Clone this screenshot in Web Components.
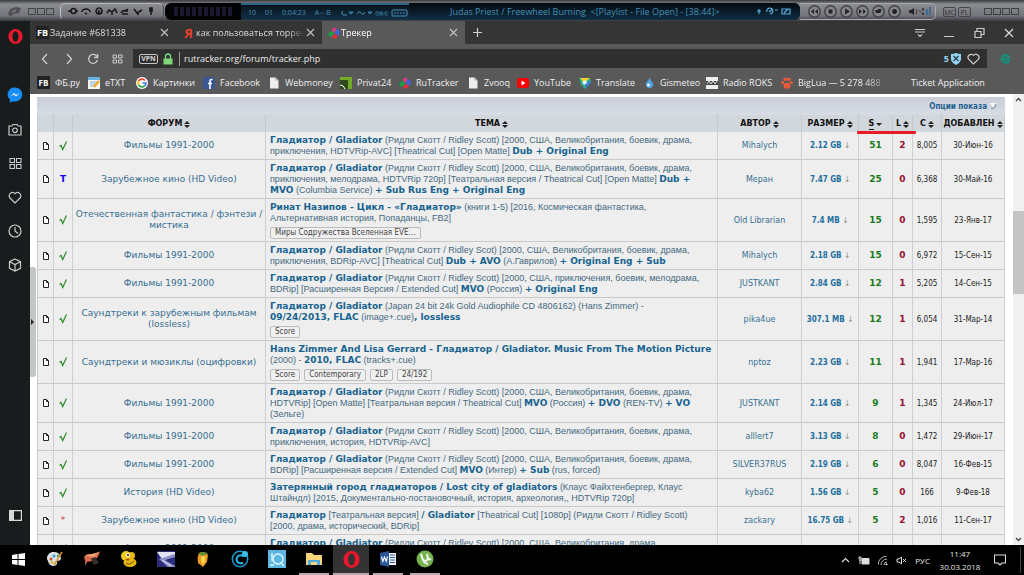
<!DOCTYPE html>
<html lang="ru">
<head>
<meta charset="utf-8">
<title>Трекер</title>
<style>
html, body { margin: 0; height: 100%; }
body { display: flex; overflow: hidden; background: #000; }
</style>
</head>
<body>
<desktop-screen></desktop-screen>
<script>
const define = (name, css, html) => {
  customElements.define(name, class extends HTMLElement {
    constructor() {
      super();
      const root = this.attachShadow({ mode: 'open' });
      root.innerHTML = `<style>*{box-sizing:border-box}svg{display:block;flex:none}button{all:unset;box-sizing:border-box;display:flex;align-items:center;justify-content:center;flex:none}a{color:inherit;text-decoration:none}${css}</style>${html}`;
    }
  });
};
const svg = (w, h, body, vb) => `<svg width="${w}" height="${h}" viewBox="${vb || `0 0 ${w} ${h}`}" fill="none" aria-hidden="true">${body}</svg>`;

const I = {
  opera: s => svg(s, s, '<ellipse cx="8" cy="8" rx="7.6" ry="8" fill="#e8192c"/><ellipse cx="8" cy="8" rx="3.2" ry="5.7" fill="var(--hole,#181c1c)"/>', '0 0 16 16'),
  close: svg(9, 9, '<path d="M1 1l7 7M8 1l-7 7" stroke="#c4c4c4" stroke-width="1.1"/>'),
  file: svg(12, 12, '<path d="M2 .5h5.5L10.500 3.500V11.500H2z" fill="#eee"/><path d="M7.500.5v3h3" fill="#aaa"/>'),
  pinwheel: svg(12, 12, '<path d="M0 7q2-3 5-3l1 3-3 3q-2 0-3-3z" fill="#15a04a"/><path d="M4 3q1-3 4-2l1 3-3 2z" fill="#e23a7e"/><path d="M8 2q4 1 4 5l-3 2-2-3z" fill="#3c63d8"/><path d="M4 9l3-2 3 2q-2 3-5 2.500z" fill="#e2303c"/>'),
};

/* ---------- media player strip ---------- */
const glyphs = ['M1 4h3M9 4h2M4 4a2.500 2.500 0 1 0 5 0a2.500 2.500 0 1 0-5 0', 'M2 5a4 3 0 0 1 8 0M5 6l2 1', 'M6 1a3 3 0 1 0 .1 0M6 3v3', 'M1 6l2-3 3 2 3-3 2 4M5 7h2', 'M2 6c2-4 4-1 7-4M3 7h6M4 4h5', 'M2 2l3 4 5-3M6 6v2', 'M6 1v3M5 1h2v3h-2zM6 4v4'];
const mediaPaths = ['M6 4l-3 2.500 3 2.500zM10 4l-3 2.500 3 2.500z', 'M4.500 4.500h4v4h-4z', 'M5 3.500l5 3-5 3z', 'M3 4l3 2.500-3 2.500zM7 4l3 2.500-3 2.500z', 'M3.500 5h2l1-1h3l-1 4h-5z', 'M6.500 4a2.500 2.500 0 1 0 .1 0'];
define('player-strip', `
:host{display:flex;height:21px;flex:none;padding:3px 5px 1px 0;background:linear-gradient(#3a3b3e,#8b8c92 20%,#74757b 75%,#3b3c3e);font:9px "Open Sans",sans-serif;color:#4590b8;align-items:stretch;overflow:hidden}
.logo{width:60px;display:flex;align-items:center;gap:6px;padding-left:7px}
.mini{display:flex;gap:1px}.mini i{width:8px;height:7px;border:1px solid #45464a}
.tools{width:104px;display:flex;align-items:center;justify-content:space-around;padding:0 5px;border:1px solid #c0c1c6;border-color:#b4b5ba #4b4c50 #4b4c50 #c0c1c6;border-radius:5px}
.lcd{flex:1;display:flex;background:#020305;border-radius:6px;margin-left:1px;overflow:hidden;min-width:0}
.eq{width:60px;margin:4px 7px 4px 9px;background:repeating-linear-gradient(90deg,#1d1730 0 4px,#020305 4px 6px)}
.time{display:flex;align-items:center;gap:9px;width:168px;padding-left:7px;font-size:7px;border-top:2px solid #2d6385;background:linear-gradient(#08131c,#123248);white-space:pre}
.song{flex:1;padding-left:41px;display:flex;align-items:center;white-space:pre;background:linear-gradient(#05090e,#0e2f44)}
.st{display:flex;align-items:center;padding-right:8px;background:linear-gradient(#05090e,#0e2f44)}
.media{display:flex;align-items:center;gap:3px;padding:0 0 0 8px;border:1px solid #a8a9ae;border-left:0;border-radius:0 5px 5px 0;width:136px;margin-right:6px}
.media > svg{margin-left:4px}
.tag{height:10px;width:13px;border:1px solid #45464a;border-radius:2px;font-size:7px;color:#303134;margin:4px 1px}
.win{display:flex;gap:1px;align-items:center;margin-left:12px}.win button{width:8px;height:7px;border:1px solid #3f4044}`,
`<div class="logo">${svg(15, 11, '<path d="M1 8l2-5 6-2 5 1-2 5-6 1-2 3z" fill="#505156"/><path d="M5 6l4-2" stroke="#929399"/>')}<div class="mini"><i></i><i></i><i></i></div></div>
<div class="tools">${glyphs.map(d => svg(12, 9, `<path d="${d}" stroke="#161719" stroke-width="1.600"/>`)).join('')}</div>
<div class="lcd"><div class="eq"></div><div class="time"><span>10</span><span>01</span><span>0:04:23</span><span>A⇔B</span>${svg(68, 8, '<path d="M3 2q-3 2 0 4h4M9 3h4l-2 2zM17 5q2-4 4-1q2 3 4-1M28 3h4l-2 2z" stroke="#4590b8"/><path d="M36 6V3h3v3zM43 3h-3v1.500h3V6h-3M48 3h-3v3h3" stroke="#306a88"/><rect x="52" y="1" width="15" height="6" rx="1" stroke="#4590b8"/><path d="M54 4h11" stroke="#4590b8" stroke-dasharray="2 1"/>')}</div>
<div class="song">Judas Priest / Freewheel Burning  &lt;[Playlist - File Open] - [38:44]&gt;</div>
<div class="st">${svg(36, 9, '<path d="M3 2v5M1 4h4M11 5a3 3 0 1 1 3 2M13 5l4-3M19 3h3M26 2h8v5h-8zM28 6l4-4" stroke="#58b0e0" stroke-width="1.200"/>')}</div></div>
<div class="media">${mediaPaths.map((d, i) => `<button aria-label="Плеер ${i + 1}">${svg(13, 13, `<circle cx="6.500" cy="6.500" r="5.700" fill="#85868c" stroke="#3f4044" stroke-width="1.400"/><path d="${d}" fill="#222326"/>`)}</button>`).join('')}
${svg(26, 11, '<path d="M1 4h2l3-2v7l-3-2h-2z" fill="#232427"/><path d="M8 3q2 2 0 5M11 5h2M14 4l1-2 1 2zM14 7l1 2 1-2z" stroke="#34353a"/><path d="M19 3v6M22 1v8" stroke="#406b93" stroke-width="2"/>')}</div>
<button class="tag">MC</button><button class="tag">PL</button><div class="win"><button aria-label="Меню"></button><button aria-label="Тень"></button><button aria-label="Свернуть"></button><button aria-label="Закрыть"></button></div>`);

/* ---------- browser side bar ---------- */
define('side-bar', `
:host{display:flex;flex-direction:column;align-items:center;width:30px;flex:none;background:#181c1c;padding:8px 0 23px}
nav{display:flex;flex-direction:column;gap:20px;margin-top:45px}
button{width:16px;height:14px}.end{margin-top:auto}`,
`<button aria-label="Opera">${I.opera(15)}</button>
<nav>
<button aria-label="Messenger">${svg(16, 16, '<path d="M8 .5a7.300 7 0 0 1 0 14q-1 0-2-.3l-3 1.500v-3a7 7 0 0 1 5-12.200z" fill="#168df5"/><path d="M3.500 9.500l3.500-3.500 2 2 3.500-2-3.500 3.500-2-2z" fill="#fff"/>')}</button>
<button aria-label="Снимок">${svg(14, 13, '<path d="M1 3h3l1-1.500h4l1 1.500h3v9h-12z" stroke="#c9cccc" stroke-width="1.200"/><circle cx="7" cy="7.300" r="2.300" stroke="#c9cccc" stroke-width="1.200"/>')}</button>
<button aria-label="Экспресс-панель">${svg(13, 13, '<path d="M1 1.500h4.500v4h-4.500zM7.500 1.500h4.500v4h-4.500zM1 7.500h4.500v4h-4.500zM7.500 7.500h4.500v4h-4.500z" stroke="#c9cccc" stroke-width="1.100"/>')}</button>
<button aria-label="Закладки">${svg(14, 13, '<path d="M7 12l-5-5a3.200 3.200 0 0 1 5-4.300a3.200 3.200 0 0 1 5 4.300z" stroke="#c9cccc" stroke-width="1.200"/>')}</button>
<button aria-label="История">${svg(14, 14, '<circle cx="7" cy="7" r="6" stroke="#c9cccc" stroke-width="1.200"/><path d="M7 3v4l3 2.500" stroke="#c9cccc" stroke-width="1.200"/>')}</button>
<button aria-label="Расширения">${svg(14, 14, '<path d="M7 1l5.500 2.700v6.600L7 13l-5.500-2.700V3.700zM1.500 3.700L7 6.500l5.500-2.800M7 6.500V13" stroke="#c9cccc" stroke-width="1.200"/>')}</button>
</nav>
<button class="end" aria-label="Панель">${svg(13, 11, '<path d="M.6.6h11.800v9.800H.6z" stroke="#d8dada" stroke-width="1.200"/><path d="M1 1h4v9H1z" fill="#d8dada"/>')}</button>`);

/* ---------- tabs ---------- */
define('browser-tab', `
:host{display:flex;align-items:center;flex:0 0 146px;height:23px;padding:0 7px 0 6px;gap:1px;color:#dcdcdc;overflow:hidden}
:host([active]){background:#595959;flex-basis:143px;color:#fff}
.t{flex:1;overflow:hidden;white-space:nowrap;-webkit-mask:linear-gradient(90deg,#000 84%,transparent)}`,
`<slot name="icon"></slot><span class="t"><slot></slot></span><button aria-label="Закрыть">${I.close}</button>`);
define('tab-strip', `
:host{display:flex;background:#353535;height:23px;flex:none;font:9px "Open Sans",sans-serif}
b{font:bold 9px "Open Sans",sans-serif;color:#fff;background:#222;width:13px;text-align:center}
.ya{font-size:13px;line-height:16px;color:#e8402a;background:none}
.new{width:24px}.win{margin-left:auto;display:flex;gap:16px;padding-right:8px}`,
`<browser-tab><b slot="icon">FB</b>Задание #681338</browser-tab>
<browser-tab><b slot="icon" class="ya">Я</b>как пользоваться торрен</browser-tab>
<browser-tab active><span slot="icon">${I.pinwheel}</span>Трекер</browser-tab>
<button class="new" aria-label="Новая вкладка">${svg(9, 9, '<path d="M4.500 0v9M0 4.500h9" stroke="#d0d0d0" stroke-width="1.200"/>')}</button>
<div class="win"><button aria-label="Меню вкладок">${svg(12, 10, '<path d="M1 1.500h10M1 4h10M4 6.500l2 2 2-2" stroke="#ccc" stroke-width="1.100"/>')}</button>
<button aria-label="Свернуть">${svg(14, 12, '<path d="M2 9.500h10" stroke="#ccc"/>')}</button>
<button aria-label="Окно">${svg(14, 12, '<path d="M3 4.500h6v6H3zM5 4V1.500h7v6H9.500" stroke="#ccc" stroke-width="1.200"/>')}</button>
<button aria-label="Закрыть">${svg(14, 12, '<path d="M3 2l8 8M11 2l-8 8" stroke="#ddd" stroke-width="1.200"/>')}</button></div>`);

/* ---------- address row ---------- */
define('address-row', `
:host{display:flex;align-items:center;background:#595959;height:29px;flex:none;padding:0 12px 0 3px}
nav{display:flex}nav button{width:24px;height:20px}
.box{flex:1;display:flex;align-items:center;height:19px;background:#2f302f;padding:0 7px 0 6px;margin:0 12px 0 4px}
.vpn{width:19px;height:10px;border:1px solid #c4c4c4;border-radius:2px;font:bold 7px "Open Sans",sans-serif;color:#d4d4d4}
.lock{margin:0 6px 0 5px}
input{flex:1;min-width:0;border:0;border-left:1px solid #999;background:none;color:#eee;font:9px "Open Sans",sans-serif;padding:0 0 0 4px;height:14px;outline:0}
.n{font:bold 9px "Open Sans",sans-serif;color:#8fd0f0;margin-right:2px}.h{margin-left:6px}`,
`<nav><button aria-label="Назад">${svg(8, 12, '<path d="M6 1L1.500 6L6 11" stroke="#ccc" stroke-width="1.300"/>')}</button>
<button aria-label="Вперёд">${svg(8, 12, '<path d="M2 1l4.500 5L2 11" stroke="#ccc" stroke-width="1.300"/>')}</button>
<button aria-label="Обновить">${svg(12, 12, '<path d="M10 3.500A4.500 4.500 0 1 0 10.500 7M10.700 1v3.500H7" stroke="#ccc" stroke-width="1.300"/>')}</button>
<button aria-label="Экспресс-панель">${svg(11, 10, '<path d="M1 1h3.500v3H1zM6.500 1h3.500v3H6.500zM1 6h3.500v3H1zM6.500 6h3.500v3H6.500z" stroke="#ccc"/>')}</button></nav>
<div class="box"><button class="vpn">VPN</button><span class="lock">${svg(10, 12, '<path d="M2.500 6V3.500a2.500 2.500 0 0 1 5 0V6" stroke="#7fd77a" stroke-width="1.300"/><path d="M.5 5.500h9v6h-9z" fill="#7fd77a"/>')}</span>
<input aria-label="Адрес" value="rutracker.org/forum/tracker.php"><span class="n">5</span>
<button aria-label="Блокировка">${svg(10, 12, '<path d="M0 1q3 0 5-1q2 1 5 1v6q-1 3-5 5q-4-2-5-5z" fill="#94d4f2"/><path d="M2.500 3l5 5M7.500 3l-5 5" stroke="#2a3a44" stroke-width="1.200"/>')}</button>
<button class="h" aria-label="В избранное">${svg(13, 12, '<path d="M6.500 11L1.800 6.300a2.900 2.900 0 0 1 4.700-3.900a2.900 2.900 0 0 1 4.700 3.900z" stroke="#ccc" stroke-width="1.200"/>')}</button></div>
<button aria-label="Расширение">${svg(13, 12, '<circle cx="6.500" cy="6" r="5" fill="#16907a"/><path d="M1 8q5 3 11-4M4 5q3-2 5 0" stroke="#595959"/>')}</button>`);

/* ---------- bookmarks ---------- */
const sq = (bg, body) => svg(12, 12, `<path d="M0 0h12v12H0z" fill="${bg}"/>${body}`);
const marks = [
  ['ФБ.ру', '<b>FB</b>'],
  ['eTXT', sq('#f4f4f0', '<path d="M0 0h12v3H0z" fill="#68b4e0"/><path d="M2 5h7M2 7h6M2 9h5" stroke="#87b4d0"/><path d="M6 10l5-6" stroke="#f0a818" stroke-width="2"/>')],
  ['Картинки', svg(12, 12, '<circle cx="6" cy="6" r="6" fill="#fff"/><path d="M9 3.500A4 4 0 0 0 2.600 4" stroke="#e8402f" stroke-width="1.700"/><path d="M2.600 4a4 4 0 0 0 0 4" stroke="#f4b80c" stroke-width="1.700"/><path d="M2.600 8A4 4 0 0 0 8.500 9" stroke="#30a350" stroke-width="1.700"/><path d="M8.500 9A4 4 0 0 0 10 6H6.500" stroke="#3d7ce8" stroke-width="1.700"/>')],
  ['Facebook', sq('#3a5795', '<path d="M9.500 2.500h-1q-1.500 0-1.500 1.500v8M5 6.500h4" stroke="#fff" stroke-width="1.600"/>')],
  ['Webmoney', I.file],
  ['Privat24', sq('#74ac28', '<path d="M0 3h8v9H0z" fill="#2f4a1c"/><path d="M0 8q4 0 5 4" stroke="#fff"/>')],
  ['RuTracker', I.pinwheel],
  ['Zvooq', I.file],
  ['YouTube', svg(12, 12, '<rect y="1" width="12" height="10" rx="2.500" fill="#f00"/><path d="M4.500 3.500v5l4-2.500z" fill="#fff"/>')],
  ['Translate', svg(12, 12, '<path d="M0 1h11l1 4-6 7-4-4z" fill="#29a88d"/><path d="M1 1h10L5 6z" fill="#f6d32a"/><path d="M6 7l5-3 1 2-5 5z" fill="#3e79d8"/><path d="M3 5l4-2 1 3-3 2z" fill="#e9f0f6"/>')],
  ['Gismeteo', svg(12, 12, '<path d="M7 0q0 3 2.500 5.500a3.600 3.600 0 1 1-6 0Q6 3 7 0z" fill="#4da3e8"/><circle cx="5.500" cy="8" r="1.600" fill="#e8f4ff"/>')],
  ['Radio ROKS', sq('#eee', '<path d="M0 4h12v4H0z" fill="#444"/><path d="M1 7l2-3 2 3 2-3 2 3 2-3" stroke="#ddd"/>')],
  ['BigLua — 5 278 488', svg(12, 12, '<ellipse cx="6" cy="8.700" rx="3.500" ry="3" fill="#ee5a36"/><circle cx="1.700" cy="5.500" r="1.600" fill="#ee5a36"/><circle cx="4.200" cy="2.200" r="1.700" fill="#ee5a36"/><circle cx="7.800" cy="2.200" r="1.700" fill="#ee5a36"/><circle cx="10.300" cy="5.500" r="1.600" fill="#ee5a36"/>'), 'fade'],
  ['Ticket Application', svg(12, 12, '')],
];
define('bookmark-bar', `
:host{display:grid;grid-template-columns:51px 48px 67px 65px 72px 59px 68px 50px 62px 64px 63px 75px 113px 1fr;align-items:center;background:#595959;height:21px;flex:none;padding:0 0 2px 7px;font:9px "Open Sans",sans-serif;color:#f0f0f0}
a{display:flex;align-items:center;gap:5px;white-space:nowrap}
.fade span{-webkit-mask:linear-gradient(90deg,#000 80%,#0006)}
b{width:13px;height:13px;line-height:13px;background:#222;color:#fff;text-align:center;font-size:8px}`,
marks.map(([t, i, c]) => `<a href="#" class="${c || ''}">${i}<span>${t}</span></a>`).join(''));

/* ---------- torrent table ---------- */
const F = 'Фильмы 1991-2000';
const G = '*Гладиатор / Gladiator* (Ридли Скотт / Ridley Scott) ';
const rows = [
  ['√', F, G + '[2000, США, Великобритания, боевик, драма,|приключения, HDTVRip-AVC] [Theatrical Cut] [Open Matte] *Dub + Original Eng*', '', 'Mihalych', '2.12 GB', 51, 2, '8,005', '30-Июн-16'],
  ['T', 'Зарубежное кино (HD Video)', G + '[2000, США, Великобритания, боевик, драма,|приключения, мелодрама, HDTVRip 720p] [Театральная версия / Theatrical Cut] [Open Matte] *Dub +|MVO* (Columbia Service) *+ Sub Rus Eng + Original Eng*', '', 'Меран', '7.47 GB', 25, 0, '6,368', '30-Май-16'],
  ['√', 'Отечественная фантастика / фэнтези /|мистика', '*Ринат Назипов - Цикл - «Гладиатор»* (книги 1-5) [2016, Космическая фантастика,|Альтернативная история, Попаданцы, FB2]', 'Миры Содружества Вселенная EVE…', 'Old Librarian', '7.4 MB', 15, 0, '1,595', '23-Янв-17'],
  ['√', F, '*Гладиатор / Gladiator* (Ридли Скотт / Ridley Scot) [2000, США, Великобритания, боевик, драма,|приключения, BDRip-AVC] [Theatrical Cut] *Dub + AVO* (А.Гаврилов) *+ Original Eng + Sub*', '', 'Mihalych', '2.18 GB', 15, 0, '6,972', '15-Сен-15'],
  ['√', F, G + '[2000, США, приключения, боевик, мелодрама,|BDRip] [Расширенная Версия / Extended Cut] *MVO* (Россия) *+ Original Eng*', '', 'JUSTKANT', '2.84 GB', 12, 1, '5,205', '14-Сен-15'],
  ['√', 'Саундтреки к зарубежным фильмам|(lossless)', '*Гладиатор / Gladiator* (Japan 24 bit 24k Gold Audiophile CD 4806162) (Hans Zimmer) -|*09/24/2013, FLAC* (image+.cue)*, lossless*', 'Score', 'pika4ue', '307.1 MB', 12, 1, '6,054', '31-Мар-14'],
  ['√', 'Саундтреки и мюзиклы (оцифровки)', '*Hans Zimmer And Lisa Gerrard - Гладиатор / Gladiator. Music From The Motion Picture*|(2000) - *2010, FLAC* (tracks+.cue)', 'Score;Contemporary;2LP;24/192', 'nptoz', '2.23 GB', 11, 1, '1,941', '17-Мар-16'],
  ['√', F, G + '[2000, США, Великобритания, боевик, драма,|HDTVRip] [Open Matte] [Театральная версия / Theatrical Cut] *MVO* (Россия) *+ DVO* (REN-TV) *+ VO*|(Зельге)', '', 'JUSTKANT', '2.14 GB', 9, 1, '1,345', '24-Июл-17'],
  ['√', F, G + '[2000, США, Великобритания, боевик, драма,|приключения, история, HDTVRip-AVC]', '', 'alllert7', '3.13 GB', 8, 0, '1,472', '29-Июн-17'],
  ['√', F, G + '[2000, США, Великобритания, боевик, драма,|BDRip] [Расширенная версия / Extended Cut] *MVO* (Интер) *+ Sub* (rus, forced)', '', 'SILVER37RUS', '2.19 GB', 6, 0, '8,047', '16-Фев-15'],
  ['√', 'История (HD Video)', '*Затерянный город гладиаторов / Lost city of gladiators* (Клаус Файхтенбергер, Клаус|Штайндл) [2015, Документально-постановочный, история, археология,, HDTVRip 720p]', '', 'kyba62', '1.56 GB', 5, 0, '166', '9-Фев-18'],
  ['*', 'Зарубежное кино (HD Video)', '*Гладиатор* [Театральная версия] */ Gladiator* [Theatrical Cut] [1080p] (Ридли Скотт / Ridley Scott)|[2000, драма, исторический, BDRip]', '', 'zackary', '16.75 GB', 5, 2, '1,016', '11-Сен-17'],
  ['√', F, G + '[2000, США, Великобритания, драма,|&nbsp;', '', '', '', '', '', '', ''],
];
const rich = s => s.replace(/\*([^*]+)\*/g, '<b>$1</b>').replace(/\|/g, '<br>');
const sort = svg(6, 7, '<path d="M0 3L3 0l3 3zM0 4h6L3 7z" fill="#222"/>');
const down = svg(6, 7, '<path d="M0 2h6L3 5z" fill="#222"/>');
const heads = ['', '', 'Форум', 'Тема', 'Автор', 'Размер', 'S', 'L', 'С', 'Добавлен'];
const kinds = { '√': 'ok', 'T': 'tmp', '*': 'no' };
define('tracker-table', `
:host{display:block;font:9px "DejaVu Sans",Verdana,sans-serif;color:#222}
.opt{height:18px;background:linear-gradient(#c8cdd8,#d8dde5);display:flex;justify-content:flex-end;align-items:center;gap:3px;padding-right:8px;font:bold 8px "DejaVu Sans Condensed","DejaVu Sans",sans-serif;color:#1c6090}
table{width:100%;table-layout:fixed;border-collapse:separate;border-spacing:0;border-left:1px solid #c3cad0}
th{height:17px;background:#d1d7dc;padding:1px 0 0;border-right:1px solid #c3c9ce;position:relative}
th button{gap:2px;width:fit-content;margin:0 auto;white-space:nowrap;color:#111;font:bold 8px/10px "DejaVu Sans",sans-serif;text-transform:uppercase}
th .cur{border-bottom:1px solid #111}
th:nth-child(7)::after{content:"";position:absolute;z-index:1;left:-2px;top:16px;width:59px;height:3px;background:#e81c28;border-radius:1px}
td{background:#eee;border-right:1px solid #ccd0d4;border-bottom:1px solid #c9c9c9;padding:0;text-align:center;line-height:11px;white-space:nowrap;color:#376f92}
td:nth-child(1) svg,.ok svg{margin:0 auto}
td:nth-child(4){text-align:left;padding:3px 0 2px 4px;font-family:"Liberation Sans",Tahoma,sans-serif;font-size:9px;color:#45697f}
td:nth-child(4) a{display:block}
td b{font:bold 9px/11px "DejaVu Sans",Verdana,sans-serif;color:#17638f}
.tags{display:flex;gap:4px;padding-top:3px}
.tags span{height:12px;font:8px/10px "DejaVu Sans Condensed","DejaVu Sans",sans-serif;border:1px solid #bbb;border-radius:2px;background:#f0f0f0;padding:0 4px;color:#444}
.tmp{font-weight:bold;color:#10e}.no{color:#c33}.author{font-size:8px}
.size{font-size:8px;font-weight:bold;color:#1f6f9e}.size i{font-style:normal;font-weight:normal;color:#888}
.s{font-weight:bold;color:#197a1c}.l{font-weight:bold;color:#9a1030}.c,.d{font-size:8px;color:#222}
.c,.d,.size{font-family:"DejaVu Sans Condensed","DejaVu Sans",sans-serif}`,
`<div class="opt"><a href="#">Опции показа</a>${svg(7, 7, '<path d="M0 0h6L3 4z" fill="#fff"/><path d="M1 5q4 2 5-4" stroke="#6d8ba8"/>')}</div>
<table><colgroup><col style="width:16px"><col style="width:19px"><col style="width:193px"><col><col style="width:84px"><col style="width:57px"><col style="width:34px"><col style="width:20px"><col style="width:29px"><col style="width:63px"></colgroup>
<thead><tr>${heads.map(h => `<th>${h ? `<button>${h === 'S' ? '<span class="cur">S</span>' + down : h + sort}</button>` : ''}</th>`).join('')}</tr></thead>
<tbody>${rows.map(r => `<tr><td>${svg(6, 8, '<path d="M.5.5h3l2 2v5h-5z" fill="#fff" stroke="#222"/><path d="M3.500.5v2h2" stroke="#222"/>')}</td>
<td class="${kinds[r[0]]}">${r[0] === '√' ? svg(9, 10, '<path d="M.5 5.500L2 4.500l1.700 4L7.500.5" stroke="#2c8a2c" stroke-width="1.200"/>') : r[0]}</td>
<td><a href="#">${r[1].replace('|', '<br>')}</a></td>
<td><a href="#">${rich(r[2])}</a>${r[3] ? `<div class="tags">${r[3].split(';').map(t => `<span>${t}</span>`).join('')}</div>` : ''}</td>
<td class="author"><a href="#">${r[4]}</a></td><td class="size">${r[5] && `<a href="#">${r[5]} <i>↓</i></a>`}</td><td class="s">${r[6]}</td><td class="l">${r[7]}</td><td class="c">${r[8]}</td><td class="d">${r[9]}</td></tr>`).join('')}</tbody></table>`);

define('page-view', `
:host{display:flex;flex:1;min-height:0;background:#fff;position:relative;overflow:hidden}
.doc{flex:1;min-width:0;padding:3px 8px 0 7px}
.bar{width:11px;flex:none;background:#f0f0f0;display:flex;flex-direction:column;align-items:center;padding:3px 0}
.thumb{width:11px;height:83px;margin-top:109px;background:#c4c4c4}.bar svg:last-child{margin-top:auto}
.grip{position:absolute;left:0;top:173px;width:6px;height:110px;background:#c4c6c6;border-radius:0 3px 3px 0;display:flex;align-items:center}`,
`<div class="doc"><slot></slot></div><div class="bar">${svg(7, 5, '<path d="M1 4l2.500-2.500L6 4" stroke="#444" stroke-width="1.300"/>')}<div class="thumb"></div>${svg(7, 5, '<path d="M1 1l2.500 2.500L6 1" stroke="#444" stroke-width="1.300"/>')}</div>
<div class="grip">${svg(4, 6, '<path d="M1 0l3 3-3 3z" fill="#222"/>')}</div>`);

/* ---------- taskbar ---------- */
const apps = [
  ['Пуск', svg(13, 13, '<path d="M0 2l5.500-1v5H0zM6.500 1L13 0v6H6.500zM0 7h5.500v5L0 11zM6.500 7H13v6l-6.500-1z" fill="#fff"/>')],
  ['Paint', svg(18, 18, '<path d="M2 11a7 6 0 1 1 13-3q0 3-4 3 1 4-3 5-5 0-6-5z" fill="#d8e4ea"/><circle cx="5" cy="9" r="1.500" fill="#d24b2d"/><circle cx="8" cy="6" r="1.500" fill="#3e9fd0"/><circle cx="12" cy="6" r="1.400" fill="#5cae46"/><circle cx="6" cy="12.500" r="1.400" fill="#e5b82b"/><path d="M8 15l8-13" stroke="#d8903c" stroke-width="1.500"/>')],
  ['Nero', svg(18, 18, '<path d="M1 7q3-4 8-3 5 0 8-3-1 5-3 7l-5 3-5 1-2 4q1-5-1-9z" fill="#d66a4c"/><path d="M2 6q7-2 14-4l-5 5z" fill="#f2a376"/><path d="M8 9l4-2 4 6-5 2z" fill="#352c2a"/>')],
  ['Aimp', svg(18, 18, '<circle cx="6" cy="6" r="5" fill="#f2ca1c"/><circle cx="11.500" cy="5.500" r="3.500" fill="#e9b812"/><ellipse cx="10" cy="12.500" rx="6.500" ry="4.500" fill="#e9b812"/><circle cx="8" cy="5" r="2" fill="#fff"/><circle cx="8" cy="5" r="1" fill="#111"/><path d="M5 9l5 0-2 2z" fill="#a5451d"/><path d="M6 13q3 3 8-2" stroke="#654509"/>')],
  ['Видео', svg(18, 18, '<path d="M0 1h18v16H0z" fill="#2a2d78"/><path d="M0 2h18v2L5 9z" fill="#dfe3f1"/><path d="M2 9l16-5v3l-10 3 10 6v1h-7z" fill="#8c90cb"/><path d="M5 10l9 6" stroke="#dfe3f1"/>')],
  ['FL Studio', svg(18, 18, '<path d="M5 3q5-3 9 2l-1 7-4 5-5-4q-1-6 1-10z" fill="#ec9a26"/><path d="M8 5q4 0 3 6l-2 4q-3-5-1-10z" fill="#f8d84d"/><path d="M4 4l4-2 6 1-5 3z" fill="#5f9035"/>')],
  ['CCleaner', svg(18, 18, '<circle cx="9" cy="9" r="7.700" stroke="#1c98d4" stroke-width="1.500"/><path d="M12.500 6.500a4 4 0 1 0-.5 6" stroke="#27acd9" stroke-width="2.200"/><circle cx="14" cy="4" r="3" fill="#35bfe9"/>')],
  ['Поиск', svg(18, 18, '<path d="M0 0h18v18H0z" fill="#5bb6e2"/><circle cx="10" cy="9" r="5" stroke="#e5f5fc" stroke-width="1.400"/><path d="M4 3v8M2 15h4M13 13l3 3" stroke="#e5f5fc" stroke-width="1.400"/>')],
  ['Проводник', svg(18, 16, '<path d="M1 2h6l2 2h8v10H1z" fill="#f5d67a"/><path d="M3 14V9h12v5h-3v-3H6v3z" fill="#4fa8d8"/>'), 'run'],
  ['Opera', I.opera(17), 'run act'],
  ['Word', svg(18, 16, '<path d="M8 2h9v12H8z" fill="#f3f5f8"/><path d="M11 4h5M11 6.500h5M11 9h5M11 11.500h5" stroke="#2a5699"/><path d="M1 2l9-2v16l-9-2z" fill="#2a5699"/><path d="M2.500 5.500l1.300 5L5.500 6l1.700 4.500L8.500 5.500" stroke="#fff" stroke-width="1.100"/>'), 'run'],
  ['uTorrent', svg(18, 18, '<circle cx="9" cy="9" r="8.500" fill="#76b350"/><path d="M5 4l2 6q3 2 5-1l-1-5M7 10q1 3 5 4M12 8q1 2 3 1" stroke="#f4faef" stroke-width="2"/>'), 'run'],
];
define('task-bar', `
:host{display:flex;height:30px;flex:none;background:#000;color:#e4e4e4;font:8px "Open Sans",sans-serif;align-items:stretch}
.apps{display:flex;gap:1px}.apps button{width:36px;border-bottom:2px solid transparent;position:relative}
.run::after{content:"";position:absolute;left:3px;right:3px;bottom:-2px;height:2px;background:#b9a9ad}
.apps .act{background:#333;--hole:#333}.act::after{left:0;right:0}
.tray{margin-left:auto;display:flex;align-items:center;gap:8px;padding-right:3px}
.clock{width:44px;text-align:center;line-height:13px;margin-right:4px}.edge{width:1px;height:26px;background:#444;margin-left:6px}`,
`<div class="apps">${apps.map(([n, i, c]) => `<button aria-label="${n}" class="${c || ''}">${i}</button>`).join('')}</div>
<div class="tray">${svg(9, 6, '<path d="M1 5l3.500-3.500L8 5" stroke="#ddd" stroke-width="1.200"/>')}
${svg(12, 9, '<path d="M4 2.500h7v5.500H4z" fill="#ddd" stroke="#ddd"/><path d="M0 2h4M2 0v8M1 4h3" stroke="#ddd"/>')}
${svg(10, 9, '<path d="M0 9A9 9 0 0 1 9 0M3 9A6 6 0 0 1 9 3M6 9A3 3 0 0 1 9 6" stroke="#bbb"/><circle cx="8.500" cy="8.500" r="1" fill="#fff"/>')}
${svg(11, 9, '<path d="M1 3h2l2.500-2v7L3 6H1zM7 3l3 3M10 3l-3 3" stroke="#ddd"/>')}
<span>РУС</span><div class="clock">11:47<br>30.03.2018</div>
${svg(12, 12, '<path d="M.5 1h11v8H8l-2 2-2-2H.5z" stroke="#ddd" stroke-width="1.100"/>')}<div class="edge"></div></div>`);

define('desktop-screen', `
:host{display:flex;flex-direction:column;flex:1;min-width:0}
.mid{display:flex;flex:1;min-height:0}.win{flex:1;display:flex;flex-direction:column;min-width:0}`,
`<player-strip></player-strip><div class="mid"><side-bar></side-bar><div class="win"><tab-strip></tab-strip><address-row></address-row><bookmark-bar></bookmark-bar><page-view><tracker-table></tracker-table></page-view></div></div><task-bar></task-bar>`);
</script>
</body>
</html>
